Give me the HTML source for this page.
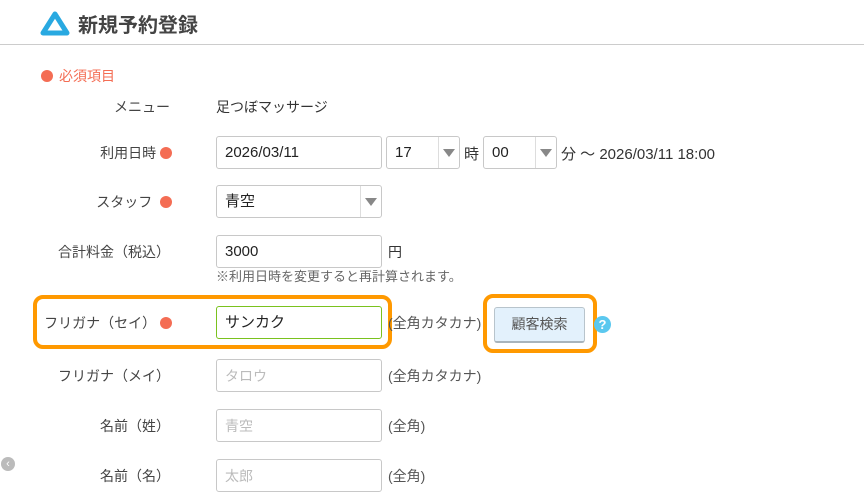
<!DOCTYPE html>
<html><head><meta charset="utf-8"><style>
body{margin:0;width:864px;height:501px;background:#fff;font-family:"Liberation Sans","Noto Sans CJK JP",sans-serif;color:#444;font-size:14px;position:relative;overflow:hidden}
.a{position:absolute;white-space:nowrap}
.lbl{position:absolute;right:694px;text-align:right;color:#444}
.dot{display:inline-block;width:12px;height:12px;border-radius:50%;background:#f46d54;vertical-align:-1px}
.in{position:absolute;left:216px;height:31px;border:1px solid #c8c8c8;border-radius:3px;box-sizing:content-box;padding-left:8px;width:156px;color:#222;font-size:15px}
.in span,.sel span{position:absolute;left:8px;top:7px;line-height:18px}
.ph{color:#bbb;font-size:14px}
.sel{position:absolute;border:1px solid #c8c8c8;border-radius:3px;height:31px;padding-left:8px;color:#222;font-size:15px;box-sizing:content-box}
.arr{position:absolute;right:0;top:0;width:20px;height:31px;border-left:1px solid #ddd}
.arr:after{content:"";position:absolute;left:4px;top:12px;border-left:6px solid transparent;border-right:6px solid transparent;border-top:8px solid #888}
</style></head><body>
<svg class="a" style="left:40px;top:10px" width="30" height="27" viewBox="0 0 30 27"><path d="M15 4 L27 23 L3 23 Z" fill="none" stroke="#29a9e1" stroke-width="5" stroke-linejoin="round"/></svg>
<div class="a" style="left:78px;top:9px;font-size:20px;font-weight:bold;color:#444">新規予約登録</div>
<div class="a" style="left:0;top:44px;width:864px;height:1px;background:#ccc"></div>
<div class="a" style="left:41px;top:66px;color:#f46d54;font-size:14px"><span class="dot" style="margin-right:6px"></span>必須項目</div>
<div class="lbl" style="top:97px">メニュー</div>
<div class="a" style="left:216px;top:97px;color:#333">足つぼマッサージ</div>
<div class="lbl" style="top:143px;right:692px">利用日時 <span class="dot"></span></div>
<div class="in" style="top:136px"><span>2026/03/11</span></div>
<div class="sel" style="left:386px;top:136px;width:64px"><span>17</span><div class="arr"></div></div>
<div class="a" style="left:464px;top:143px;color:#333;font-size:15px">時</div>
<div class="sel" style="left:483px;top:136px;width:64px"><span>00</span><div class="arr"></div></div>
<div class="a" style="left:561px;top:143px;color:#333;font-size:15px">分 〜 2026/03/11 18:00</div>
<div class="lbl" style="top:192px;right:692px">スタッフ&nbsp; <span class="dot"></span></div>
<div class="sel" style="left:216px;top:185px;width:156px"><span>青空</span><div class="arr"></div></div>
<div class="lbl" style="top:242px">合計料金（税込）</div>
<div class="in" style="top:235px"><span>3000</span></div>
<div class="a" style="left:388px;top:242px;color:#333">円</div>
<div class="a" style="left:216px;top:266px;color:#666;font-size:13px">※利用日時を変更すると再計算されます。</div>
<div class="a" style="left:33px;top:295px;width:351px;height:46px;border:4px solid #f90;border-radius:10px"></div>
<div class="lbl" style="top:313px;right:692px">フリガナ（セイ） <span class="dot"></span></div>
<div class="in" style="top:306px;border-color:#7ac21e"><span>サンカク</span></div>
<div class="a" style="left:388px;top:313px;color:#555">(全角カタカナ)</div>
<div class="a" style="left:483px;top:294px;width:106px;height:51px;border:4px solid #f90;border-radius:10px"></div>
<div class="a" style="left:494px;top:307px;width:89px;height:33px;background:#e3f1fc;border:1px solid #b8c4cc;border-bottom:2px solid #a8b4bc;border-radius:3px;text-align:center;line-height:33px;color:#555">顧客検索</div>
<div class="a" style="left:594px;top:316px;width:17px;height:17px;border-radius:50%;background:#5bc8ef;color:#fff;font-weight:bold;font-size:13px;text-align:center;line-height:17px">?</div>
<div class="lbl" style="top:366px">フリガナ（メイ）</div>
<div class="in ph" style="top:359px"><span>タロウ</span></div>
<div class="a" style="left:388px;top:366px;color:#555">(全角カタカナ)</div>
<div class="lbl" style="top:416px">名前（姓）</div>
<div class="in ph" style="top:409px"><span>青空</span></div>
<div class="a" style="left:388px;top:416px;color:#555">(全角)</div>
<div class="lbl" style="top:466px">名前（名）</div>
<div class="in ph" style="top:459px"><span>太郎</span></div>
<div class="a" style="left:388px;top:466px;color:#555">(全角)</div>
<div class="a" style="left:1px;top:457px;width:14px;height:14px;border-radius:50%;background:#bbb;color:#fff;font-size:11px;line-height:14px;text-align:center">‹</div>
</body></html>
